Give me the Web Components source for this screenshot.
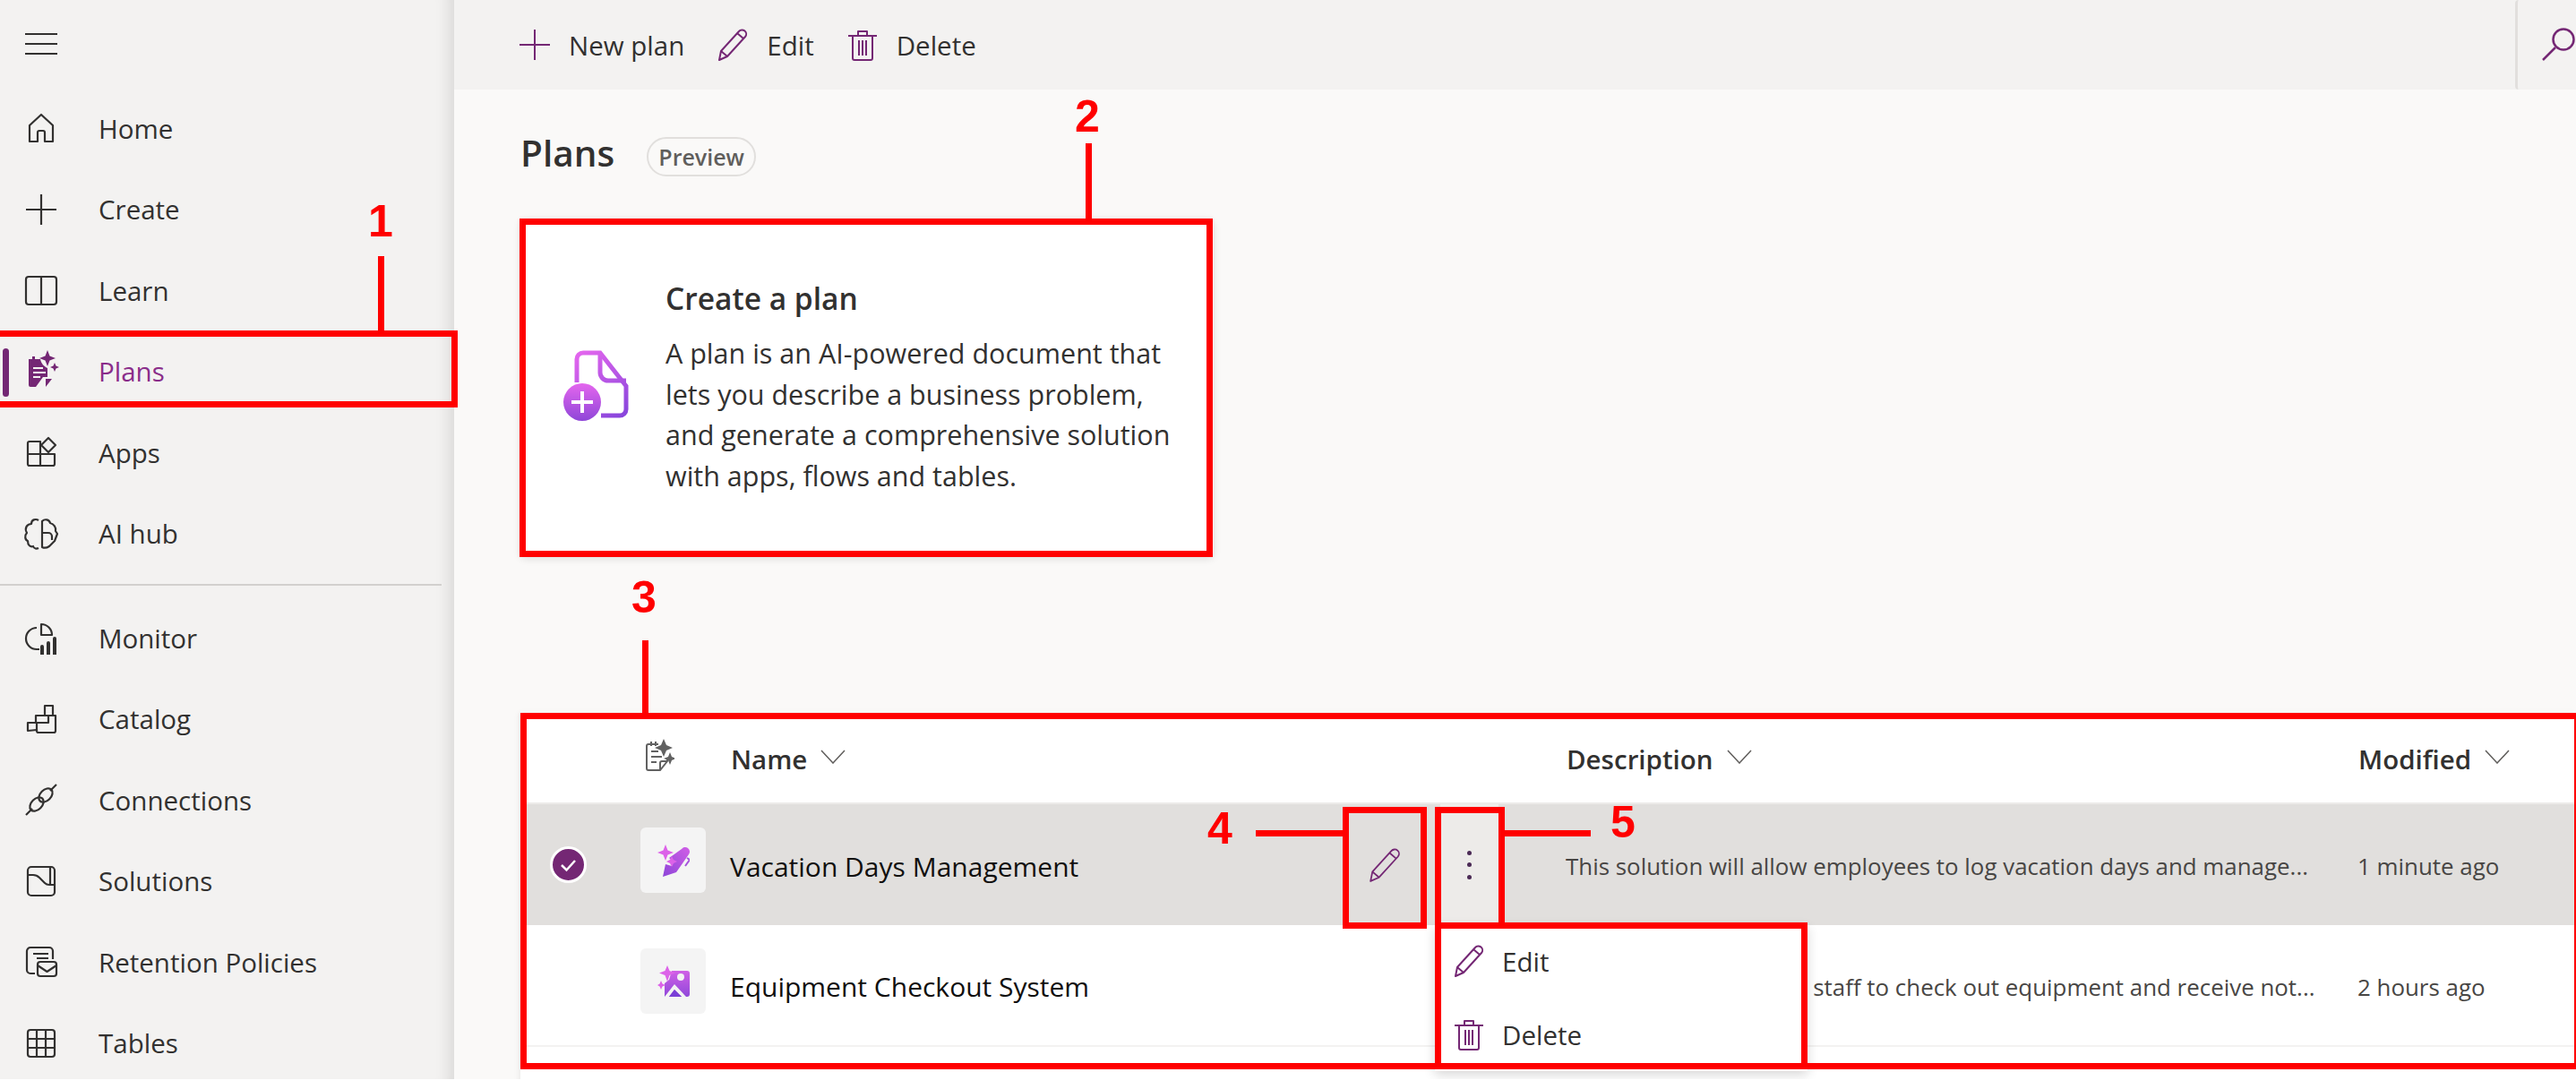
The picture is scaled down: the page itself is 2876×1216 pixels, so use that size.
<!DOCTYPE html>
<html lang="en">
<head>
<meta charset="utf-8">
<title>Plans</title>
<style>
  html, body { margin: 0; background: #fff; overflow: hidden; }
  body { font-family: "Open Sans", "Noto Sans", sans-serif; color: #323130; height: 1216px; }
</style>
</head>
<body>
<app-shell>
  <side-nav slot="nav">
    <nav-item icon="home">Home</nav-item>
    <nav-item icon="plus">Create</nav-item>
    <nav-item icon="book">Learn</nav-item>
    <nav-item icon="plans" active>Plans</nav-item>
    <nav-item icon="apps">Apps</nav-item>
    <nav-item icon="brain">AI hub</nav-item>
    <nav-divider></nav-divider>
    <nav-item icon="monitor">Monitor</nav-item>
    <nav-item icon="catalog">Catalog</nav-item>
    <nav-item icon="plug">Connections</nav-item>
    <nav-item icon="solutions">Solutions</nav-item>
    <nav-item icon="retention">Retention Policies</nav-item>
    <nav-item icon="tables">Tables</nav-item>
  </side-nav>
  <command-bar slot="bar"></command-bar>
  <page-heading>Plans</page-heading>
  <create-card heading="Create a plan">A plan is an AI-powered document that lets you describe a business problem, and generate a comprehensive solution with apps, flows and tables.</create-card>
  <plans-table>
    <plan-row selected icon="pen" name="Vacation Days Management" desc="This solution will allow employees to log vacation days and manage..." modified="1 minute ago"></plan-row>
    <plan-row icon="picture" name="Equipment Checkout System" desc="This solution will allow staff to check out equipment and receive not..." modified="2 hours ago"></plan-row>
    <plan-row icon="none"></plan-row>
    <row-menu></row-menu>
  </plans-table>
</app-shell>
<call-outs>
  <red-box style="left:-7px;top:369px;width:518px;height:86px"></red-box>
  <red-box style="left:580px;top:244px;width:774px;height:378px"></red-box>
  <red-box style="left:581px;top:796px;width:2295px;height:398px;border-right-width:2px"></red-box>
  <red-box style="left:1499px;top:901px;width:94px;height:136px"></red-box>
  <red-box style="left:1602px;top:901px;width:78px;height:136px"></red-box>
  <red-box style="left:1602px;top:1030px;width:416px;height:164px"></red-box>
  <red-line style="left:422px;top:286px;width:7px;height:84px"></red-line>
  <red-line style="left:1212px;top:160px;width:7px;height:85px"></red-line>
  <red-line style="left:717px;top:715px;width:7px;height:82px"></red-line>
  <red-line style="left:1402px;top:927px;width:98px;height:7px"></red-line>
  <red-line style="left:1680px;top:927px;width:96px;height:7px"></red-line>
  <red-num style="left:411px;top:218px">1</red-num>
  <red-num style="left:1200px;top:101px">2</red-num>
  <red-num style="left:705px;top:638px">3</red-num>
  <red-num style="left:1348px;top:896px">4</red-num>
  <red-num style="left:1798px;top:889px">5</red-num>
</call-outs>

<script>
const ICONS = {
  home: '<path d="M5 33V15L18 3l13 12v18h-9V23a2 2 0 0 0-2-2h-4a2 2 0 0 0-2 2v10z"/>',
  plus: '<path d="M18 1v34M1 18h34"/>',
  book: '<rect x="1" y="3" width="34" height="31" rx="3"/><path d="M18 3v31"/>',
  plans: '<path fill="#742774" stroke="none" d="M4 4h4V1h3v3h6c1 5 4 8 8 10v10h-5l-8 11H6a2 2 0 0 1-2-2z"/><path stroke="#f3f2f1" d="M9 14h11M9 19h14M9 24h8"/><path fill="#742774" stroke="none" d="M25-6l2.500 6.500L34 3l-6.500 2.500L25 12l-2.500-6.500L16 3l6.500-2.500zM33 8l1.500 3.500L38 13l-3.500 1.500L33 18l-1.500-3.500L28 13l3.500-1.500zM23 26h7l-7 9z"/>',
  apps: '<path d="M5 6h12v27H5a2 2 0 0 1-2-2V8a2 2 0 0 1 2-2zM17 20h16v11a2 2 0 0 1-2 2H17M3 20h14"/><path d="M26 2l8 8-8 8-8-8z"/>',
  brain: '<path d="M15 3c-3-2-8-1-8 4-5 0-8 5-5 10-3 3-2 8 1 9 0 5 3 7 6 6 1 3 4 3 6 2M19 4c3-3 8-2 9 2 4 1 7 5 6 9l2 3-3 8-6 6c-3 2-6 2-8 1zM19 17h7a4 4 0 0 1 4 4v4"/>',
  monitor: '<path d="M13 7a12 12 0 0 0 0 24h3"/><path d="M18 3a12 12 0 0 1 12 12H18z"/><path fill="#323130" stroke="none" d="M17 28a2 2 0 0 1 4 0v9h-4zM24 24a2 2 0 0 1 4 0v13h-4zM31 19a2 2 0 0 1 4 0v18h-4z"/>',
  catalog: '<path d="M3 31v-9h9v-8h10V3h9v11h3v17a2 2 0 0 1-2 2H15a2 2 0 0 1-2-2v-1z"/><path d="M22 14h12M13 31v-9h13v-8"/>',
  plug: '<path d="M1 35l7-7M28 8l7-7"/><ellipse cx="13" cy="23" rx="9" ry="6" transform="rotate(-45 13 23)"/><ellipse cx="23" cy="13" rx="9" ry="6" transform="rotate(-45 23 13)"/>',
  solutions: '<rect x="3" y="2" width="30" height="32" rx="4"/><path d="M3 11h6c3 0 5 1 7 3l6 6c2 2 3 2 5 2h6M28 3v19"/>',
  retention: '<path d="M11 31H6a4 4 0 0 1-4-4V6a4 4 0 0 1 4-4h21a4 4 0 0 1 4 4v9M9 9h17M13 14h13"/><rect x="14" y="18" width="21" height="16" rx="3"/><path d="M14 22l10.500 7L35 22"/>',
  tables: '<rect x="3" y="3" width="30" height="30" rx="3"/><path d="M13 3v30M23 3v30M3 13h30M3 23h30"/>',
  pencil: '<path d="M3 35l2-10L25 3a4 4 0 0 1 7 6L12 31zM5 25l7 6M23 5l7 6"/>',
  trash: '<path d="M2 8h32M13 8V3h10v5M7 8v25a2 2 0 0 0 2 2h18a2 2 0 0 0 2-2V8M14 13v17M18 13v17M22 13v17"/>',
  search: '<circle cx="24" cy="12" r="11.500"/><path d="M15 21L1 35"/>'
};

const CHEVRON = '<svg width="28" height="16" viewBox="0 0 28 16" fill="none" stroke="#605e5c" stroke-width="1.500"><path d="M1 1l13 14L27 1"/></svg>';

function svgIcon(name, size, color, weight) {
  return `<svg viewBox="0 0 36 36" width="${size}" height="${size}" fill="none" stroke="${color}" stroke-width="${weight}" stroke-linejoin="round" overflow="visible">${ICONS[name]}</svg>`;
}

class AppShell extends HTMLElement {
  constructor() {
    super();
    this.attachShadow({ mode: 'open' });
    this.shadowRoot.innerHTML = `
      <style>
        :host { display: grid; grid-template-columns: 507px 1fr; height: 1205px; overflow: hidden; background: #fff; }
        .main { background: #faf9f8; min-width: 0; display: flex; flex-direction: column; }
        .content { padding-left: 74px; }
      </style>
      <slot name="nav"></slot>
      <div class="main">
        <slot name="bar"></slot>
        <div class="content"><slot></slot></div>
      </div>`;
  }
}

class SideNav extends HTMLElement {
  constructor() {
    super();
    this.attachShadow({ mode: 'open' });
    this.shadowRoot.innerHTML = `
      <style>
        :host { display: block; background: #f3f2f1; height: 1205px; box-shadow: inset -22px 0 18px -18px rgba(0,0,0,.12); }
        .burger { height: 98px; display: flex; align-items: center; padding-left: 28px; box-sizing: border-box; }
        .burger i { display: block; width: 36px; height: 24px; border-top: 2px solid #323130; border-bottom: 2px solid #323130; position: relative; box-sizing: border-box; }
        .burger i::after { content: ""; position: absolute; left: 0; right: 0; top: 9px; height: 2px; background: #323130; }
      </style>
      <div class="burger"><i></i></div>
      <slot></slot>`;
  }
}

class NavItem extends HTMLElement {
  constructor() {
    super();
    this.attachShadow({ mode: 'open' });
    const active = this.hasAttribute('active');
    this.shadowRoot.innerHTML = `
      <style>
        :host { display: flex; align-items: center; height: 90.5px; padding-left: 28px; gap: 46px; font-size: 29.500px; position: relative; color: ${active ? '#8a2d8a' : '#323130'}; }
        svg { flex: none; }
        .bar { position: absolute; left: 3px; top: 19px; width: 7px; height: 54px; border-radius: 4px; background: #742774; }
      </style>
      ${active ? '<div class="bar"></div>' : ''}
      ${svgIcon(this.getAttribute('icon'), 36, '#323130', 2.200)}
      <span><slot></slot></span>`;
  }
}

class NavDivider extends HTMLElement {
  constructor() {
    super();
    this.attachShadow({ mode: 'open' });
    this.shadowRoot.innerHTML = `
      <style>:host { display: block; height: 2px; margin: 11px 14px 13px 0; background: #d2d0ce; }</style>`;
  }
}

class CommandBar extends HTMLElement {
  constructor() {
    super();
    this.attachShadow({ mode: 'open' });
    this.shadowRoot.innerHTML = `
      <style>
        :host { display: flex; align-items: center; height: 100px; padding-left: 72px; background: #f3f2f1; font-size: 29.500px; position: relative; }
        .btn { display: flex; align-items: center; gap: 20px; margin-right: 36px; }
        .search { margin-left: auto; width: 68px; height: 100px; box-sizing: border-box; border-left: 3px solid #e1dfdd; border-radius: 4px; display: flex; align-items: center; padding-left: 27px; }
      </style>
      <div class="btn">${svgIcon('plus', 36, '#742774', 2)}<span>New plan</span></div>
      <div class="btn">${svgIcon('pencil', 36, '#742774', 2)}<span>Edit</span></div>
      <div class="btn">${svgIcon('trash', 36, '#742774', 2)}<span>Delete</span></div>
      <div class="search">${svgIcon('search', 36, '#742774', 2.5)}</div>`;
  }
}

class PageHeading extends HTMLElement {
  constructor() {
    super();
    this.attachShadow({ mode: 'open' });
    this.shadowRoot.innerHTML = `
      <style>
        :host { display: flex; align-items: center; height: 52px; padding-top: 46px; gap: 36px; }
        h1 { margin: -4px 0 0; font-size: 40.500px; font-weight: 600; color: #323130; }
        .pill { width: 122px; height: 44px; margin-top: 5px; box-sizing: border-box; display: flex; align-items: center; justify-content: center; border: 2px solid #e1dfdd; border-radius: 22px; font-size: 25px; font-weight: 600; color: #605e5c; }
      </style>
      <h1><slot></slot></h1><span class="pill">Preview</span>`;
  }
}

class CreateCard extends HTMLElement {
  constructor() {
    super();
    this.attachShadow({ mode: 'open' });
    this.shadowRoot.innerHTML = `
      <style>
        :host { display: flex; align-items: center; width: 774px; height: 378px; box-sizing: border-box; margin-top: 46px; background: #fff; border-radius: 6px; box-shadow: 0 2px 8px rgba(0,0,0,.12); padding-left: 48px; }
        svg { flex: none; margin-right: 41px; margin-bottom: 5px; }
        h2 { margin: 0 0 18px; font-size: 33.500px; font-weight: 600; color: #323130; line-height: 42px; }
        p { margin: 0; width: 590px; font-size: 30.500px; line-height: 45.500px; color: #323130; }
      </style>
      <svg width="73" height="79" viewBox="0 0 73 79" fill="none">
        <defs>
          <linearGradient id="g" x1="0" y1="0" x2="0" y2="1"><stop offset="0" stop-color="#e466ee"/><stop offset="1" stop-color="#8f46d8"/></linearGradient>
          <linearGradient id="s" gradientUnits="userSpaceOnUse" x1="15" y1="3" x2="60" y2="76"><stop offset="0" stop-color="#e466ee"/><stop offset="1" stop-color="#8a46dc"/></linearGradient>
        </defs>
        <path d="M15 36V10a7 7 0 0 1 7-7h19l29 37v26a7 7 0 0 1-7 7H42" stroke="url(#s)" stroke-width="5"/>
        <path d="M41 3v22a9 9 0 0 0 9 9h20" stroke="url(#s)" stroke-width="5"/>
        <circle cx="21" cy="58" r="21" fill="url(#g)"/>
        <path d="M21 46v24M9 58h24" stroke="#fff" stroke-width="4"/>
      </svg>
      <div><h2>${this.getAttribute('heading')}</h2><p><slot></slot></p></div>`;
  }
}

class PlansTable extends HTMLElement {
  constructor() {
    super();
    this.attachShadow({ mode: 'open' });
    this.shadowRoot.innerHTML = `
      <style>
        :host { display: block; position: relative; margin-top: 174px; background: #fff; height: 460px; box-shadow: -2px 0 6px rgba(0,0,0,.06); }
        .head { display: grid; grid-template-columns: 134px 101px 933px 884px 1fr; height: 100px; align-items: center; border-bottom: 2px solid #edebe9; font-size: 29.500px; font-weight: 600; color: #323130; }
        .col { display: flex; align-items: center; gap: 15px; padding-top: 3px; }
        .col svg { margin-top: -6px; }
        .ic { grid-column: 2; display: flex; padding-left: 6px; margin-top: -6px; }
      </style>
      <div class="head">
        <div class="ic">
          <svg width="32" height="36" viewBox="0 0 32 36" fill="none" stroke="#616161" stroke-width="2"><path d="M14 6H3a2 2 0 0 0-2 2v25a2 2 0 0 0 2 2h13l8-10V22M6 3v5M11 3v5M6 14h8M6 20h12M6 26h6M16 35v-8a2 2 0 0 1 2-2h6"/><path fill="#616161" stroke="none" d="M20 0l3 7 7 3-7 3-3 7-3-7-7-3 7-3zM27 15l2 5 5 2-5 2-2 5-2-5-5-2 5-2z"/></svg>
        </div>
        <div class="col"><span>Name</span>${CHEVRON}</div>
        <div class="col"><span>Description</span>${CHEVRON}</div>
        <div class="col"><span>Modified</span>${CHEVRON}</div>
      </div>
      <slot></slot>`;
  }
}

class PlanRow extends HTMLElement {
  constructor() {
    super();
    this.attachShadow({ mode: 'open' });
    const selected = this.hasAttribute('selected');
    const icon = this.getAttribute('icon');
    const glyphs = {
      pen: `<svg width="36" height="36" viewBox="0 0 36 36">
          <defs><linearGradient id="p" x1="1" y1="0" x2="0" y2="1"><stop offset="0" stop-color="#d05ee6"/><stop offset="1" stop-color="#8d45d8"/></linearGradient></defs>
          <path fill="#dc62e8" d="M9 0l2.500 6.500L18 9l-6.500 2.500L9 18l-2.500-6.500L0 9l6.500-2.500z"/>
          <path fill="url(#p)" d="M27 5a5 5 0 0 1 8 6L21 31 6 36l3-14 7 2 2-5-5-4z"/>
          <path fill="#dc62e8" d="M16 13l2 4 4 2-4 2-2 4-2-4-4-2 4-2z"/>
          <path fill="none" stroke="#a552dc" stroke-width="2" d="M33 15l3 2-5 7"/></svg>`,
      picture: `<svg width="36" height="36" viewBox="0 0 36 36">
          <defs><linearGradient id="q" x1="0" y1="0" x2="0" y2="1"><stop offset="0" stop-color="#d060e6"/><stop offset="1" stop-color="#9048da"/></linearGradient></defs>
          <path fill="url(#q)" d="M16 6h17a3 3 0 0 1 3 3v23a3 3 0 0 1-3 3H8V20l5-4z"/>
          <circle cx="26" cy="13" r="4" fill="#f3f3f3"/>
          <path fill="#f3f3f3" d="M8 35l11-14 13 14h-5l-8-8-6 8z"/>
          <path fill="#7a3fd6" d="M13 35l6-8 8 8z"/>
          <path fill="#dc62e8" d="M11 0l2.500 6L20 8.500 13.500 11 11 18l-2.500-7L2 8.500 8.500 6zM4 17l1.500 3.500L9 22l-3.500 1.500L4 27l-1.500-3.500L0 22l2.500-1.500z"/></svg>`
    };
    const actions = selected ? `
        <div class="act pencil">${svgIcon('pencil', 38, '#742774', 1.700)}</div>
        <div class="act dots"><i></i><i></i><i></i></div>` : '';
    const check = selected ? `
        <svg width="41" height="41" viewBox="0 0 41 41"><circle cx="20.500" cy="20.500" r="19" fill="#742774" stroke="#fff" stroke-width="3"/><path d="M13 21l5.500 5.500L28 16" fill="none" stroke="#fff" stroke-width="2.500"/></svg>` : '';
    this.shadowRoot.innerHTML = `
      <style>
        :host { display: grid; grid-template-columns: 134px 100px 933px 884px 1fr; height: ${selected ? 135 : 136}px; box-sizing: border-box; align-items: center; background: ${selected ? '#e1dfdd' : '#fff'}; ${selected ? '' : 'border-bottom: 2px solid #f3f2f1;'} font-size: 25.900px; color: #484644; }
        .check { display: flex; justify-content: center; padding-right: 28px; }
        .tile { width: 73px; height: 73px; background: #f4f4f4; border-radius: 6px; display: flex; align-items: center; justify-content: center; align-self: start; margin-top: 26px; }
        .name { display: flex; align-items: center; height: 100%; font-size: 30px; color: #11100f; }
        .name span { flex: 1; padding-top: 3px; }
        .text { padding-top: 3px; white-space: nowrap; }
        .act { display: flex; align-items: center; justify-content: center; height: 100%; }
        .pencil { width: 80px; margin-right: 22px; }
        .dots { width: 65px; margin-right: 75px; background: #edebe9; flex-direction: column; gap: 8.500px; }
        .dots i { width: 5px; height: 5px; border-radius: 50%; background: #4b2a55; }
      </style>
      <div class="check">${check}</div>
      ${icon === 'none' ? '<div></div>' : `<div class="tile">${glyphs[icon]}</div>`}
      <div class="name"><span>${this.getAttribute('name') || ''}</span>${actions}</div>
      <div class="text">${this.getAttribute('desc') || ''}</div>
      <div class="text">${this.getAttribute('modified') || ''}</div>`;
  }
}

class RowMenu extends HTMLElement {
  constructor() {
    super();
    this.attachShadow({ mode: 'open' });
    this.shadowRoot.innerHTML = `
      <style>
        :host { position: absolute; left: 1021px; top: 236px; width: 416px; height: 164px; box-sizing: border-box; background: #fff; box-shadow: 0 4px 12px rgba(0,0,0,.16); font-size: 29.500px; color: #323130; }
        .item { display: flex; align-items: center; height: 82px; padding-left: 20px; gap: 19px; }
      </style>
      <div class="item">${svgIcon('pencil', 36, '#742774', 2)}<span>Edit</span></div>
      <div class="item">${svgIcon('trash', 36, '#742774', 2)}<span>Delete</span></div>`;
  }
}

// annotation overlay drawn over the finished screen
class CallOuts extends HTMLElement {
  constructor() {
    super();
    this.attachShadow({ mode: 'open' });
    this.shadowRoot.innerHTML = `
      <style>:host { position: absolute; left: 0; top: 0; width: 2876px; height: 1216px; overflow: hidden; pointer-events: none; }</style>
      <slot></slot>`;
  }
}

class RedBox extends HTMLElement {
  constructor() {
    super();
    this.attachShadow({ mode: 'open' });
    this.shadowRoot.innerHTML = `
      <style>:host { position: absolute; box-sizing: border-box; border: 7px solid #f00; }</style>`;
  }
}

class RedLine extends HTMLElement {
  constructor() {
    super();
    this.attachShadow({ mode: 'open' });
    this.shadowRoot.innerHTML = `
      <style>:host { position: absolute; background: #f00; }</style>`;
  }
}

class RedNum extends HTMLElement {
  constructor() {
    super();
    this.attachShadow({ mode: 'open' });
    this.shadowRoot.innerHTML = `
      <style>:host { position: absolute; font: bold 50px/58px "Liberation Sans", Arial, sans-serif; color: #f00; }</style>
      <slot></slot>`;
  }
}

customElements.define('app-shell', AppShell);
customElements.define('side-nav', SideNav);
customElements.define('nav-item', NavItem);
customElements.define('nav-divider', NavDivider);
customElements.define('command-bar', CommandBar);
customElements.define('page-heading', PageHeading);
customElements.define('create-card', CreateCard);
customElements.define('plans-table', PlansTable);
customElements.define('plan-row', PlanRow);
customElements.define('row-menu', RowMenu);
customElements.define('call-outs', CallOuts);
customElements.define('red-box', RedBox);
customElements.define('red-line', RedLine);
customElements.define('red-num', RedNum);
</script>
</body>
</html>
